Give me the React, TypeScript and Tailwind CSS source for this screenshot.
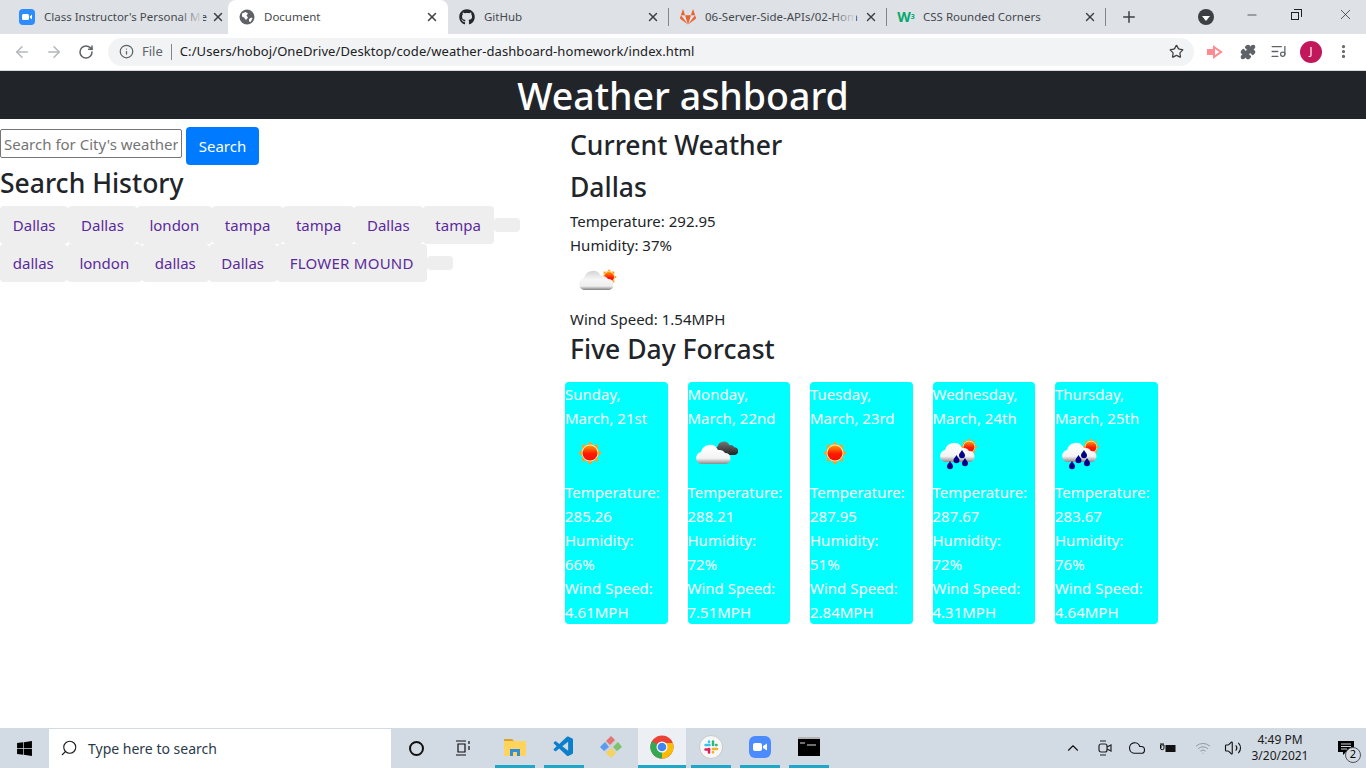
import {
  ArrowLeft,
  ArrowRight,
  RotateCw,
  Info,
  Star,
  Puzzle,
  ListMusic,
  MoreVertical,
  X,
  Plus,
  Minus,
  Search,
  ChevronUp,
  Cloud,
  Volume2,
  Wifi,
} from "lucide-react";
import { FaGithub, FaGitlab, FaWindows } from "react-icons/fa";
import { VscVscode } from "react-icons/vsc";

const row1 = ["Dallas", "Dallas", "london", "tampa", "tampa", "Dallas", "tampa"];
const row2 = ["dallas", "london", "dallas", "Dallas", "FLOWER MOUND"];

const forecast = [
  { day: "Sunday,", date: "March, 21st", temp: "285.26", hum: "66%", wind: "4.61MPH", icon: "sun" },
  { day: "Monday,", date: "March, 22nd", temp: "288.21", hum: "72%", wind: "7.51MPH", icon: "cloud" },
  { day: "Tuesday,", date: "March, 23rd", temp: "287.95", hum: "51%", wind: "2.84MPH", icon: "sun" },
  { day: "Wednesday,", date: "March, 24th", temp: "287.67", hum: "72%", wind: "4.31MPH", icon: "rain" },
  { day: "Thursday,", date: "March, 25th", temp: "283.67", hum: "76%", wind: "4.64MPH", icon: "rain" },
];

function Defs() {
  return (
    <defs>
      <linearGradient id="sunFill" x1="0" y1="0" x2="0" y2="1">
        <stop offset="0" stopColor="#ff9a00" />
        <stop offset="0.55" stopColor="#ff1a00" />
        <stop offset="1" stopColor="#f01010" />
      </linearGradient>
      <linearGradient id="cloudFill" x1="0" y1="0" x2="0" y2="1">
        <stop offset="0" stopColor="#ffffff" />
        <stop offset="0.7" stopColor="#f4f4f4" />
        <stop offset="1" stopColor="#8c8c8c" />
      </linearGradient>
      <linearGradient id="paleFill" x1="0" y1="0" x2="0" y2="1">
        <stop offset="0" stopColor="#d4d4d4" />
        <stop offset="0.45" stopColor="#f6f6f6" />
        <stop offset="0.8" stopColor="#eeeeee" />
        <stop offset="1" stopColor="#7f7f7f" />
      </linearGradient>
      <linearGradient id="darkFill" x1="0" y1="0" x2="0" y2="1">
        <stop offset="0" stopColor="#777777" />
        <stop offset="1" stopColor="#222222" />
      </linearGradient>
    </defs>
  );
}

function SunShape({ cx, cy, r }: { cx: number; cy: number; r: number }) {
  const rays = [0, 45, 90, 135, 180, 225, 270, 315];
  return (
    <g>
      {rays.map((a) => (
        <polygon
          key={a}
          points={`${cx - r * 0.42},${cy - r * 1.05} ${cx + r * 0.42},${cy - r * 1.05} ${cx},${cy - r * 1.55}`}
          fill="#ff9f1a"
          transform={`rotate(${a} ${cx} ${cy})`}
        />
      ))}
      <circle cx={cx} cy={cy} r={r * 1.12} fill="#ffe9b0" />
      <circle cx={cx} cy={cy} r={r} fill="url(#sunFill)" />
    </g>
  );
}

function CloudShape({ x, y, s, fill = "url(#cloudFill)" }: { x: number; y: number; s: number; fill?: string }) {
  return (
    <path
      transform={`translate(${x} ${y}) scale(${s})`}
      d="M6 20a6 6 0 0 1-1-11.900a9 9 0 0 1 17-2a6.500 6.500 0 0 1 7 3a5.500 5.500 0 0 1 1 10.900z"
      fill={fill}
    />
  );
}

function Drop({ x, y }: { x: number; y: number }) {
  return <path d={`M${x} ${y - 4}c1.500 2.500 3 3.500 3 5.200a3 3 0 0 1-6 0c0-1.700 1.500-2.700 3-5.200z`} fill="#00008b" />;
}

function WeatherIcon({ kind }: { kind: string }) {
  return (
    <svg width="50" height="50" viewBox="0 0 50 50" className="block">
      <Defs />
      {kind === "sun" && <SunShape cx={25} cy={23} r={7.500} />}
      {kind === "few" && (
        <>
          <SunShape cx={39} cy={20} r={5} />
          <CloudShape x={9} y={13} s={1} fill="url(#paleFill)" />
        </>
      )}
      {kind === "cloud" && (
        <>
          <CloudShape x={26} y={11} s={0.7} fill="url(#darkFill)" />
          <CloudShape x={8} y={14} s={1} />
        </>
      )}
      {kind === "rain" && (
        <>
          <SunShape cx={36} cy={17} r={5.500} />
          <CloudShape x={7} y={12} s={1} />
          <Drop x={17} y={35} />
          <Drop x={23.500} y={29} />
          <Drop x={29} y={24} />
          <Drop x={32} y={32} />
        </>
      )}
    </svg>
  );
}

function Tab({
  width,
  icon,
  title,
  active,
  fade,
  sep,
}: {
  width: string;
  icon: React.ReactNode;
  title: string;
  active?: boolean;
  fade?: boolean;
  sep?: boolean;
}) {
  return (
    <div
      className={`${width} relative flex h-[34px] shrink-0 items-center pl-[11px] pr-[9px] ${
        active ? "rounded-t-lg bg-white" : ""
      }`}
    >
      <span className="flex w-[16px] shrink-0 items-center justify-center">{icon}</span>
      <span className="relative ml-[9px] flex-1 whitespace-nowrap text-[11.500px] text-[#45494d]">
        {title}
        {fade && <span className="absolute right-[4px] top-0 h-full w-[24px] bg-gradient-to-r from-transparent to-[#dee1e6]" />}
      </span>
      <X size={14} strokeWidth={2.500} className="ml-1 shrink-0 text-[#3c4043]" />
      {sep && <span className="absolute right-0 top-[8px] h-[18px] w-px bg-[#80868b]" />}
    </div>
  );
}

function ChromeTabs() {
  return (
    <div className="flex h-[34px] items-end bg-[#dee1e6] pl-[8px]">
      <Tab
        width="w-[220px]"
        title="Class Instructor's Personal Me"
        fade
        icon={
          <svg width="16" height="16" viewBox="0 0 16 16">
            <rect width="16" height="16" rx="4" fill="#2d8cff" />
            <rect x="3" y="5" width="7" height="6" rx="1.500" fill="#fff" />
            <path d="M10.800 7.400 13 5.600v4.800l-2.200-1.800z" fill="#fff" />
          </svg>
        }
      />
      <Tab
        width="w-[220px]"
        title="Document"
        active
        icon={
          <svg width="16" height="16" viewBox="0 0 16 16">
            <circle cx="8" cy="8" r="7.500" fill="#5f6368" />
            <path d="M3 4.500 6.500 3 9 4.500 7.500 6.500 9 8.500 7 11 5 8.500 3 7.500zM10 10l2.500-1.500 1 1-2 3.500-1.500-.5z" fill="#fff" />
          </svg>
        }
      />
      <Tab width="w-[221px]" title="GitHub" sep icon={<FaGithub size={16} className="text-[#24292e]" />} />
      <Tab
        width="w-[218px]"
        title="06-Server-Side-APIs/02-Hom"
        fade
        sep
        icon={<FaGitlab size={16} className="text-[#e8622b]" />}
      />
      <Tab
        width="w-[219px]"
        title="CSS Rounded Corners"
        sep
        icon={
          <span className="text-[14px] font-bold leading-none text-[#04aa6d]">
            W<sup className="text-[7px]">3</sup>
          </span>
        }
      />
      <Plus size={18} strokeWidth={2} className="ml-[14px] mb-[8px] text-[#3c4043]" />
      <span className="ml-[60px] mb-[9px] flex h-[16px] w-[16px] items-center justify-center rounded-full bg-[#3c4043]">
        <span className="mt-[2px] border-x-[4px] border-t-[5px] border-x-transparent border-t-white" />
      </span>
      <Minus size={14} strokeWidth={1.200} className="ml-[31px] mb-[12px] text-[#202124]" />
      <span className="relative ml-[32px] mb-[14px] h-[11px] w-[11px]">
        <span className="absolute bottom-0 left-0 h-[8px] w-[8px] border border-[#202124] bg-[#dee1e6]" />
        <span className="absolute right-0 top-0 h-[8px] w-[8px] border-r border-t border-[#202124]" />
      </span>
      <X size={17} strokeWidth={1} className="ml-[35px] mb-[11px] text-[#202124]" />
    </div>
  );
}

function Toolbar() {
  return (
    <div className="flex h-[37px] items-center border-b border-[#d6d8db] bg-white pb-[1px]">
      <ArrowLeft size={18} strokeWidth={2} className="ml-[13px] text-[#b5b7ba]" />
      <ArrowRight size={18} strokeWidth={2} className="ml-[14px] text-[#b5b7ba]" />
      <RotateCw size={16} strokeWidth={2.300} className="ml-[15px] text-[#5f6368]" />
      <div className="ml-[14px] flex h-[28px] w-[1086px] items-center rounded-full bg-[#f1f3f4] pl-[11px] pr-[10px]">
        <Info size={15} strokeWidth={2} className="text-[#5f6368]" />
        <span className="ml-[8px] text-[13px] text-[#5f6368]">File</span>
        <span className="ml-[8px] h-[16px] w-px bg-[#80868b]" />
        <span className="ml-[8px] flex-1 text-[13px] tracking-[0.09px] text-[#202124]">
          C:/Users/hoboj/OneDrive/Desktop/code/weather-dashboard-homework/index.html
        </span>
        <Star size={15} strokeWidth={2} className="text-[#3c4043]" />
      </div>
      <svg width="16" height="14" viewBox="0 0 16 14" className="ml-[13px]">
        <rect x="0" y="4" width="7" height="6" fill="#ff8a8f" />
        <path d="M7 2l7 5-7 5z" fill="none" stroke="#ff8a8f" strokeWidth="2" />
      </svg>
      <Puzzle size={16} strokeWidth={2} className="ml-[17px] fill-[#5f6368] text-[#5f6368]" />
      <ListMusic size={17} strokeWidth={1.800} className="ml-[14px] text-[#5f6368]" />
      <span className="ml-[13px] flex h-[22px] w-[22px] items-center justify-center rounded-full bg-[#c2185b] text-[11px] text-white">
        J
      </span>
      <MoreVertical size={17} strokeWidth={2.500} className="ml-[13px] text-[#5f6368]" />
    </div>
  );
}

function LeftColumn() {
  return (
    <div className="w-[565px] shrink-0 pt-[8px]">
      <div className="flex items-start">
        <input
          placeholder="Search for City's weather"
          className="mt-[2px] h-[29px] w-[182px] rounded-[2px] border border-[#767676] px-[3px] text-[15px] placeholder:text-[#757575]"
        />
        <button className="ml-[4px] h-[38px] w-[73px] rounded bg-[#007bff] text-[15px] text-white">Search</button>
      </div>
      <h2 className="mt-px mb-[6px] text-[26.500px] font-medium leading-[34px] text-[#212529]">Search History</h2>
      <HistoryRow items={row1} />
      <HistoryRow items={row2} />
    </div>
  );
}

function HistoryRow({ items }: { items: string[] }) {
  return (
    <div className="flex items-center">
      {items.map((c, i) => (
        <a
          key={i}
          className={`rounded bg-[#eeeeee] px-[12.800px] py-[7px] text-[15px] leading-[24px] text-[#5b2a9c] ${
            c === "FLOWER MOUND" ? "tracking-[0.25px]" : ""
          }`}
        >
          {c}
        </a>
      ))}
      <span className="h-[14px] w-[26px] rounded bg-[#eeeeee]" />
    </div>
  );
}

function RightColumn() {
  return (
    <div className="flex-1 pt-[9px]">
      <div className="pl-[5px] text-[15px] leading-[24px] text-[#212529]">
        <h2 className="mb-[8px] text-[26.500px] font-medium leading-[34px]">Current Weather</h2>
        <h2 className="mb-[5px] text-[26.500px] font-medium leading-[34px]">Dallas</h2>
        <p>Temperature: 292.95</p>
        <p>Humidity: 37%</p>
        <WeatherIcon kind="few" />
        <p>Wind Speed: 1.54MPH</p>
        <h2 className="mt-px mb-[16px] text-[26.500px] font-medium leading-[34px]">Five Day Forcast</h2>
      </div>
      <div className="flex gap-[20px]">
        {forecast.map((f) => (
          <div key={f.day} className="h-[242px] w-[102.500px] rounded bg-[#00ffff] text-[15px] leading-[24px] text-white">
            <p>{f.day}</p>
            <p className="whitespace-nowrap">{f.date}</p>
            <WeatherIcon kind={f.icon} />
            <p>Temperature:</p>
            <p>{f.temp}</p>
            <p>Humidity:</p>
            <p>{f.hum}</p>
            <p>Wind Speed:</p>
            <p>{f.wind}</p>
          </div>
        ))}
      </div>
    </div>
  );
}

function TaskApp({ width, children, active }: { width: string; children: React.ReactNode; active?: boolean }) {
  return (
    <div
      className={`${width} flex h-[40px] shrink-0 items-center justify-center border-b-[3px] border-[#1ea7c9] ${
        active ? "bg-[#eceff4]" : ""
      }`}
    >
      {children}
    </div>
  );
}

function Taskbar() {
  return (
    <div className="flex h-[40px] shrink-0 items-center bg-[#d2dae4]">
      <FaWindows size={17} className="ml-[16px] text-black" />
      <div className="ml-[16px] flex h-[39px] w-[342px] items-center bg-white pl-[11px]">
        <Search size={18} strokeWidth={1.500} className="-scale-x-100 text-[#202020]" />
        <span className="ml-[10px] text-[14px] text-[#2b3a4a]">Type here to search</span>
      </div>
      <span className="ml-[18px] h-[15px] w-[15px] rounded-full border-[2.500px] border-[#111111]" />
      <svg width="16" height="16" viewBox="0 0 16 16" className="ml-[31px]" fill="none" stroke="#111" strokeWidth="1.200">
        <path d="M1 1h10M3 4h7v8H3zM1 15h10M14 1v3M14 6v4" />
      </svg>
      <div className="ml-[24px] flex">
        <TaskApp width="w-[40px]">
          <svg width="22" height="20" viewBox="0 0 22 20">
            <path d="M0 2h8l2 2H0z" fill="#d9a520" />
            <rect y="4" width="22" height="15" rx="1" fill="#ffd35c" />
            <path d="M6 19v-7h10v7h-3v-4H9v4z" fill="#2f8fdd" />
          </svg>
        </TaskApp>
        <TaskApp width="w-[40px] ml-[9px]">
          <VscVscode size={24} className="text-[#0b7fcc]" />
        </TaskApp>
        <div className="flex w-[54px] shrink-0 items-center justify-center pb-[3px]">
          <svg width="24" height="24" viewBox="0 0 24 24">
            <path d="M12 1 23 12 12 23 1 12z" fill="#cfd3d8" />
            <path d="M7 6 12 1l4 4-5 5z" fill="#e57373" />
            <path d="M1 12l5-5 4 5-5 4z" fill="#5b9bf0" />
            <path d="M14 12l5-5 4 5-5 4z" fill="#7cc36a" />
            <path d="M7 18l5-5 5 5-5 5z" fill="#f4d35e" />
          </svg>
        </div>
        <TaskApp width="w-[48px]" active>
          <svg width="24" height="24" viewBox="0 0 24 24">
            <circle cx="12" cy="12" r="11.500" fill="#ea4335" />
            <path d="M12 12 1.900 6.200A11.500 11.500 0 0 0 12 23.500z" fill="#34a853" />
            <path d="M12 12V23.500A11.500 11.500 0 0 0 22.800 8H12z" fill="#fbbc05" />
            <circle cx="12" cy="12" r="5.500" fill="#fff" />
            <circle cx="12" cy="12" r="4.300" fill="#4285f4" />
          </svg>
        </TaskApp>
        <TaskApp width="w-[40px] ml-[5px]">
          <svg width="24" height="24" viewBox="0 0 24 24">
            <circle cx="12" cy="12" r="11.500" fill="#f7f7f7" stroke="#c8c8c8" />
            <path d="M6.500 14.500h3.500" stroke="#e01e5a" strokeWidth="2.500" strokeLinecap="round" />
            <path d="M14 6.500v3.500" stroke="#2eb67d" strokeWidth="2.500" strokeLinecap="round" />
            <path d="M6.500 10h4M10 6.500v.5" stroke="#36c5f0" strokeWidth="2.500" strokeLinecap="round" />
            <path d="M14 14h4M14 17.500v-.5" stroke="#ecb22e" strokeWidth="2.500" strokeLinecap="round" />
            <path d="M10 14v3.500" stroke="#e01e5a" strokeWidth="2.500" strokeLinecap="round" />
            <path d="M17.500 10h-.5" stroke="#2eb67d" strokeWidth="2.500" strokeLinecap="round" />
          </svg>
        </TaskApp>
        <TaskApp width="w-[40px] ml-[9px]">
          <svg width="22" height="22" viewBox="0 0 22 22">
            <rect width="22" height="22" rx="6" fill="#4a8cff" />
            <rect x="4" y="7" width="9" height="8" rx="2" fill="#fff" />
            <path d="M14 10l4-2.500v7L14 12z" fill="#fff" />
          </svg>
        </TaskApp>
        <TaskApp width="w-[40px] ml-[9px]">
          <svg width="22" height="19" viewBox="0 0 22 19">
            <rect width="22" height="19" fill="#000" />
            <rect width="22" height="2" fill="#b5b5b5" />
            <path d="M2 6h5M9 8h9" stroke="#ddd" strokeWidth="1.200" />
          </svg>
        </TaskApp>
      </div>
      <ChevronUp size={18} strokeWidth={1.500} className="ml-[235px] text-[#111111]" />
      <svg width="16" height="18" viewBox="0 0 16 18" className="ml-[15px]" fill="none" stroke="#222" strokeWidth="1.200">
        <rect x="2" y="5" width="8" height="8" rx="2" />
        <path d="M10 8l4-2v6l-4-2M3 2h6M3 16h6" />
      </svg>
      <Cloud size={18} strokeWidth={1.500} className="ml-[15px] text-[#111111]" />
      <svg width="16" height="12" viewBox="0 0 16 12" className="ml-[14px]">
        <path d="M0 5h2M1 3v-2M3 1v2M0.500 3h3.500v3a1.500 1.500 0 0 1-3.500 0z" stroke="#111" strokeWidth="1" fill="none" />
        <rect x="5.500" y="3" width="10" height="7" fill="#111" />
      </svg>
      <Wifi size={16} strokeWidth={1.300} className="ml-[19px] text-[#8a8f96]" />
      <Volume2 size={18} strokeWidth={1.500} className="ml-[13px] text-[#111111]" />
      <div className="ml-px w-[74px] text-center text-[12px] leading-[16px] text-[#1a1a1a]">
        <div>4:49 PM</div>
        <div>3/20/2021</div>
      </div>
      <div className="relative ml-[21px]">
        <svg width="16" height="15" viewBox="0 0 16 15">
          <path d="M0 0h16v11H8l-3 3v-3H0z" fill="#000" />
          <path d="M3 3h10M3 5.500h10M3 8h6" stroke="#d2dae4" />
        </svg>
        <span className="absolute left-[7px] top-[6px] flex h-[16px] w-[16px] items-center justify-center rounded-full border border-[#555] bg-[#d2dae4] text-[11px] text-black">
          2
        </span>
      </div>
    </div>
  );
}

export default function App() {
  return (
    <div className="flex h-screen flex-col overflow-hidden bg-white font-['Noto_Sans',sans-serif]">
      <ChromeTabs />
      <Toolbar />
      <div className="flex h-[48px] shrink-0 items-center justify-center bg-[#212529] pt-px text-[37.500px] font-medium leading-[48px] text-white">
        Weather ashboard
      </div>
      <div className="flex flex-1">
        <LeftColumn />
        <RightColumn />
      </div>
      <Taskbar />
    </div>
  );
}
